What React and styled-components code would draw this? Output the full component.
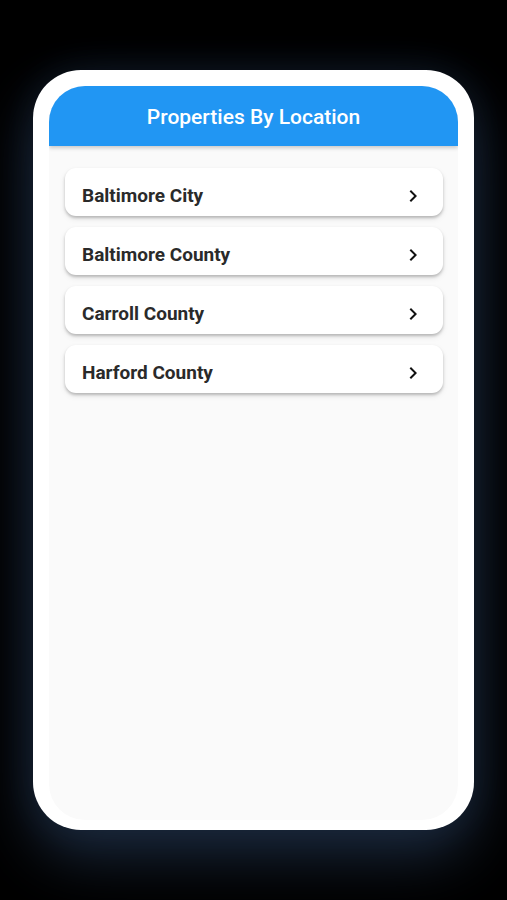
import React from "react";
import styled, { createGlobalStyle } from "styled-components";

const GlobalStyle = createGlobalStyle`
  html, body {
    margin: 0;
    padding: 0;
    background: #000;
  }
  body {
    font-family: Roboto, "Liberation Sans", sans-serif;
  }
`;

const Stage = styled.div`
  width: 507px;
  height: 900px;
  box-sizing: border-box;
  padding: 70px 33px 70px 33px;
  background: #000;
  display: flex;
`;

const Frame = styled.div`
  flex: 1;
  display: flex;
  padding: 16px 16px 10px 16px;
  background: #fff;
  border-radius: 48px;
  box-shadow: 0 26px 60px 0 rgba(30, 46, 68, 0.9),
    0 0 40px 0 rgba(18, 30, 46, 0.6);
`;

const Screen = styled.div`
  flex: 1;
  display: flex;
  flex-direction: column;
  background: #fafafa;
  border-radius: 36px;
  overflow: hidden;
`;

const AppBar = styled.header`
  height: 60px;
  flex: none;
  display: flex;
  align-items: center;
  justify-content: center;
  padding-top: 2px;
  box-sizing: border-box;
  background: #2196f3;
  color: #fff;
  font-size: 21px;
  font-weight: 500;
  box-shadow: 0 2px 4px rgba(0, 0, 0, 0.2);
  position: relative;
  z-index: 1;
`;

const List = styled.div`
  display: flex;
  flex-direction: column;
  gap: 11px;
  padding: 22px 15px 0 16px;
`;

const Card = styled.div`
  height: 48px;
  display: flex;
  align-items: center;
  justify-content: space-between;
  padding: 7px 18px 0 17px;
  box-sizing: border-box;
  background: #fff;
  border-radius: 11px;
  box-shadow: 0 2px 3px rgba(0, 0, 0, 0.22), 0 3px 6px rgba(0, 0, 0, 0.08);
`;

const Label = styled.span`
  font-size: 19px;
  font-weight: 700;
  color: #2a2a2a;
`;

const Chevron = () => (
  <svg width="24" height="24" viewBox="0 0 24 24" fill="#111">
    <path d="M10 6L8.59 7.41 13.17 12l-4.58 4.59L10 18l6-6z" />
  </svg>
);

const places = ["Baltimore City", "Baltimore County", "Carroll County", "Harford County"];

const App = () => {
  return (
    <Stage>
      <GlobalStyle />
      <Frame>
        <Screen>
          <AppBar>Properties By Location</AppBar>
          <List>
            {places.map((p) => (
              <Card key={p}>
                <Label>{p}</Label>
                <Chevron />
              </Card>
            ))}
          </List>
        </Screen>
      </Frame>
    </Stage>
  );
};

export default App;
